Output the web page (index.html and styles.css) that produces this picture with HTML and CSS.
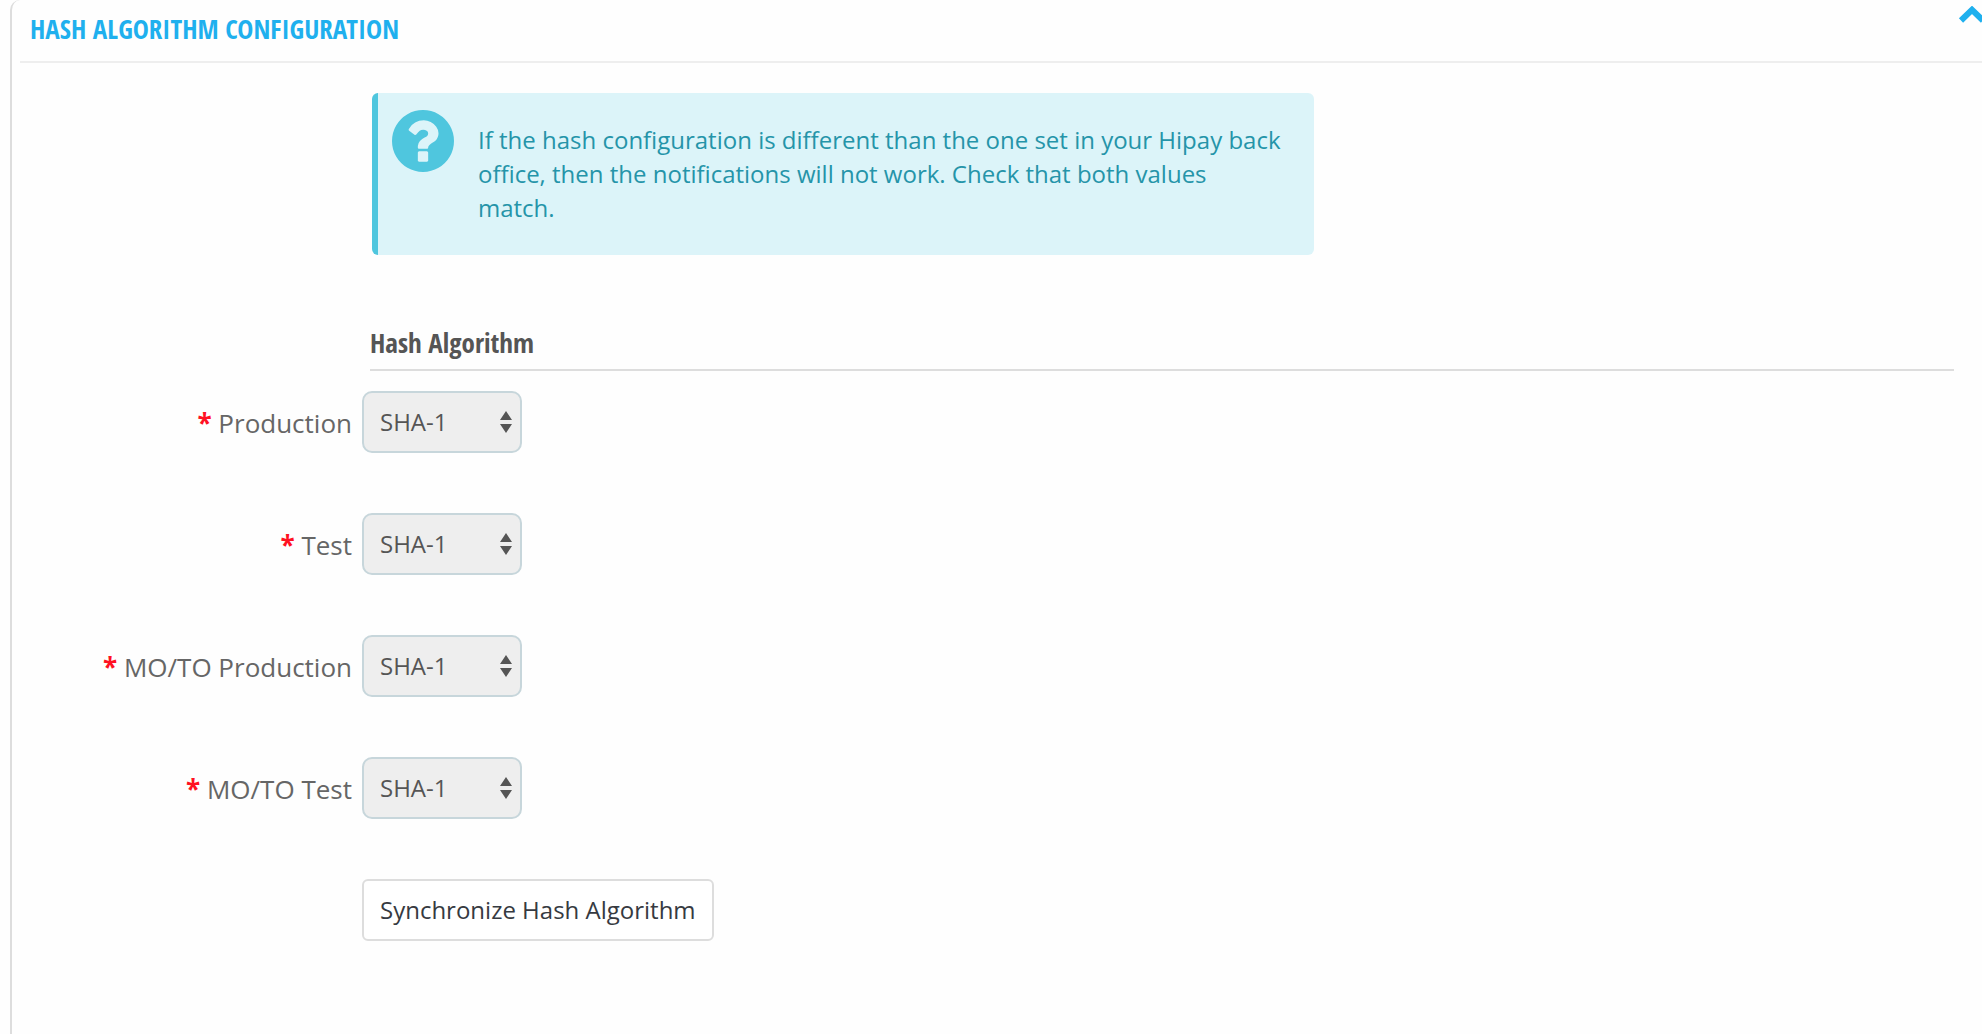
FILE: index.html
```html
<!DOCTYPE html>
<html lang="en">
<head>
<meta charset="utf-8">
<title>Hash Algorithm Configuration</title>
<link rel="stylesheet" href="styles.css">
</head>
<body>
<section class="panel">
  <header class="panel-heading">
    <h2 class="panel-title">HASH ALGORITHM CONFIGURATION</h2>
    <button class="collapse" type="button" aria-label="Collapse">
      <svg width="28" height="18" viewBox="0 0 28 18"><path d="M3 14.500 14 3.800 25 14.500" fill="none" stroke="currentColor" stroke-width="6"/></svg>
    </button>
  </header>
  <form class="panel-body">
    <div class="alert">
      <svg class="alert-icon" viewBox="128 128 1536 1536"><path fill="currentColor" d="M1024 1376v-192q0-14-9-23t-23-9h-192q-14 0-23 9t-9 23v192q0 14 9 23t23 9h192q14 0 23-9t9-23zM1280 704q0-88-55.500-163t-138.500-116-170-41q-243 0-371 213-15 24 8 42l132 100q7 6 19 6 16 0 25-12 53-68 86-92 34-24 86-24 48 0 85.500 26t37.500 59q0 38-20 61t-68 45q-63 28-115.500 86.500t-52.500 125.500v36q0 14 9 23t23 9h192q14 0 23-9t9-23q0-19 21.500-49.500t54.500-49.500q32-18 49-28.500t46-35 44.500-48 28-60.500 12.500-81zM1664 896q0 209-103 385.500t-279.500 279.500-385.500 103-385.500-103-279.500-279.500-103-385.500 103-385.500 279.500-279.500 385.500-103 385.500 103 279.500 279.500 103 385.500z"/></svg>
      <p class="alert-text">If the hash configuration is different than the one set in your Hipay back office, then the notifications will not work. Check that both values match.</p>
    </div>
    <h3 class="section-title">Hash Algorithm</h3>
    <div class="rows">
      <div class="row">
        <label class="label" for="production"><span class="required">*</span> Production</label>
        <div class="select-box">
          <select class="select" id="production" disabled><option>SHA-1</option></select>
          <svg class="arrows" viewBox="0 0 12 22"><path d="M6 0 12 9H0zM0 13h12L6 22z" fill="currentColor"/></svg>
        </div>
      </div>
      <div class="row">
        <label class="label" for="test"><span class="required">*</span> Test</label>
        <div class="select-box">
          <select class="select" id="test" disabled><option>SHA-1</option></select>
          <svg class="arrows" viewBox="0 0 12 22"><path d="M6 0 12 9H0zM0 13h12L6 22z" fill="currentColor"/></svg>
        </div>
      </div>
      <div class="row">
        <label class="label" for="moto-production"><span class="required">*</span> MO/TO Production</label>
        <div class="select-box">
          <select class="select" id="moto-production" disabled><option>SHA-1</option></select>
          <svg class="arrows" viewBox="0 0 12 22"><path d="M6 0 12 9H0zM0 13h12L6 22z" fill="currentColor"/></svg>
        </div>
      </div>
      <div class="row">
        <label class="label" for="moto-test"><span class="required">*</span> MO/TO Test</label>
        <div class="select-box">
          <select class="select" id="moto-test" disabled><option>SHA-1</option></select>
          <svg class="arrows" viewBox="0 0 12 22"><path d="M6 0 12 9H0zM0 13h12L6 22z" fill="currentColor"/></svg>
        </div>
      </div>
      <div class="row">
        <button class="button" type="button">Synchronize Hash Algorithm</button>
      </div>
    </div>
  </form>
</section>
</body>
</html>
```
FILE: styles.css
```css
* { box-sizing: border-box; }

body {
  margin: 0;
  background: #fefefe;
  color: #555;
  font-family: "Open Sans", "Noto Sans", sans-serif;
  font-size: 24px;
  overflow-x: hidden;
}

.panel {
  min-height: 100vh;
  margin-left: 10px;
  padding-left: 8px;
  border-left: 2px solid #ddd;
  border-top-left-radius: 10px;
}

.panel-heading {
  display: flex;
  align-items: flex-start;
  justify-content: space-between;
  height: 63px;
  padding-left: 10px;
  border-bottom: 2px solid #eee;
  overflow: hidden;
}

.panel-title,
.section-title {
  margin: 0;
  font-family: "Ubuntu Condensed", "Open Sans Condensed", "Open Sans", sans-serif;
  font-size: 27px;
  font-weight: 400;
}

.panel-title {
  color: #1fb0ee;
  line-height: 58px;
}

.collapse {
  display: flex;
  margin: 6px -4px 0 0;
  padding: 0;
  border: 0;
  background: none;
  color: #1fb0ee;
}

.panel-body { padding: 30px 28px 92px 0; }

.alert {
  display: flex;
  gap: 24px;
  max-width: 942px;
  margin-left: 352px;
  padding: 17px 30px 30px 14px;
  border-left: 6px solid #4fc6de;
  border-radius: 6px;
  background: #dcf4f9;
}

.alert-icon {
  flex: none;
  width: 62px;
  height: 62px;
  color: #4fc6de;
}

.alert-text {
  margin: 13px 0 0;
  color: #2594a9;
  line-height: 34px;
}

.section-title {
  margin: 68px 0 20px 350px;
  padding-bottom: 6px;
  border-bottom: 2px solid #ddd;
  line-height: 40px;
}

.rows {
  display: grid;
  gap: 60px;
}

.row {
  display: grid;
  grid-template-columns: 332px auto;
  column-gap: 10px;
  justify-content: start;
}

.label {
  padding-top: 14px;
  color: #666;
  font-size: 26px;
  line-height: 36px;
  text-align: right;
}

.required {
  color: #f12;
  font-weight: 700;
}

.select-box { position: relative; }

.select {
  appearance: none;
  display: block;
  width: 160px;
  height: 62px;
  padding: 0 16px 2px;
  border: 2px solid #c7d6db;
  border-radius: 10px;
  background: #eee;
  color: #555;
  font: inherit;
  opacity: 1;
}

.arrows {
  position: absolute;
  top: 20px;
  right: 10px;
  width: 12px;
  height: 22px;
  pointer-events: none;
}

.button {
  grid-column: 2;
  height: 62px;
  padding: 0 16px 2px;
  border: 2px solid #ddd;
  border-radius: 6px;
  background: #fff;
  color: #363a41;
  font: inherit;
}
```
